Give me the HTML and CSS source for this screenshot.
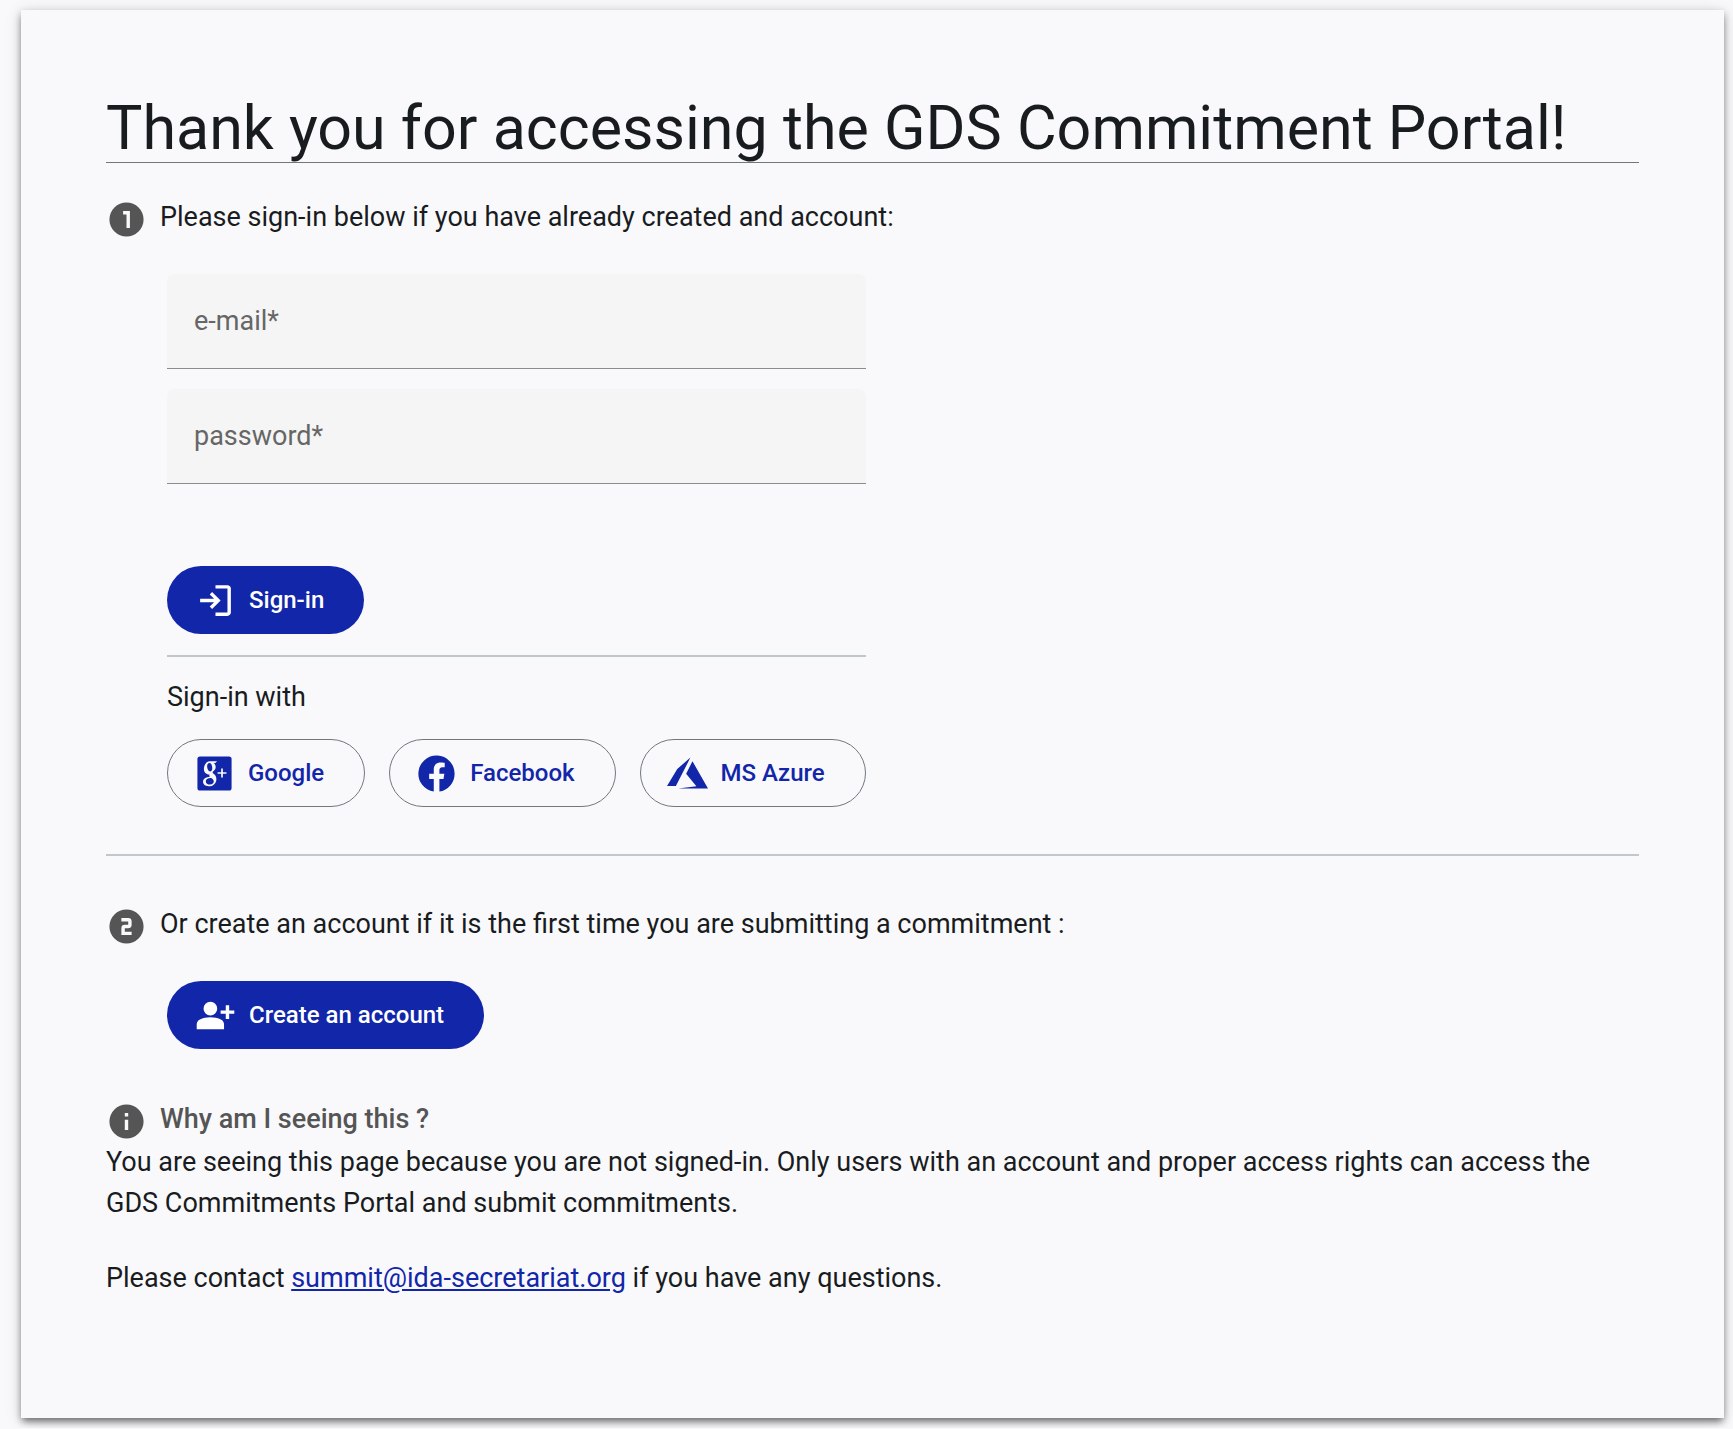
FILE: index.html
```html
<!DOCTYPE html>
<html lang="en">
<head>
    <meta charset="UTF-8">
    <meta name="viewport" content="width=device-width, initial-scale=1.0">
    <title>GDS Commitment Portal</title>
    <link rel="stylesheet" href="styles.css">
</head>
<body>
    <main class="card">
        <h1 class="title">Thank you for accessing the GDS Commitment Portal!</h1>

        <section>
            <h2 class="step">
                <svg class="icon" viewBox="0 0 24 24" aria-hidden="true"><path fill-rule="evenodd" d="M12 2a10 10 0 1 0 0 20 10 10 0 0 0 0-20zM10 7h4v10h-2V9h-2z"/></svg>
                Please sign-in below if you have already created and account:
            </h2>

            <form class="login">
                <div class="field">
                    <label for="email">e-mail*</label>
                    <input type="email" id="email" required>
                </div>
                <div class="field">
                    <label for="password">password*</label>
                    <input type="password" id="password" required>
                </div>
                <button type="submit" class="btn btn-filled btn-submit">
                    <svg class="icon" viewBox="0 -960 960 960" aria-hidden="true"><path d="M480-120v-80h280v-560H480v-80h280q33 0 56.5 23.5T840-760v560q0 33-23.5 56.5T760-120H480Zm-80-160-55-58 102-102H120v-80h327L345-622l55-58 200 200-200 200Z"/></svg>
                    Sign-in
                </button>
                <hr class="divider">
                <p class="with">Sign-in with</p>
                <div class="providers">
                    <button type="button" class="btn btn-outlined">
                        <svg class="icon" viewBox="0 0 24 24" aria-hidden="true"><rect x="2" y="2" width="20" height="20" rx="1.5"/><path fill="#f9f9fc" fill-rule="evenodd" d="M9.2 4.900h4.300l-1 .9h-1c.8.6 1.200 1.400 1.200 2.400 0 1.200-.7 2-1.400 2.500-.7.600-.4 1 .2 1.500 1 .8 1.600 1.700 1.600 3.100 0 2.400-1.900 4.200-4.500 4.200-2 0-3.300-1.100-3.300-2.600 0-1.800 1.700-2.900 4-3-.3-.4-.4-.8-.2-1.300-1.900.1-3.300-1.200-3.300-3.200 0-2.500 1.500-4.500 3.400-4.500zM9 5.800c-.9 0-1.400.9-1.300 2.300.1 1.500.8 2.700 1.700 2.700s1.400-.9 1.300-2.200C10.600 7 10 5.800 9 5.800zM9.700 14.600c-1.800 0-2.800.8-2.800 1.900 0 1.200 1 2 2.500 2 1.400 0 2.200-.8 2.200-1.900 0-.8-.6-1.300-1.500-2z"/><path fill="none" stroke="#f9f9fc" d="M13.800 11.700h5.200M16.400 9.100v5.200"/></svg>
                        Google
                    </button>
                    <button type="button" class="btn btn-outlined">
                        <svg class="icon" viewBox="0 0 24 24" aria-hidden="true"><path d="M22.600 12.100a10.600 10.600 0 1 0-12.200 10.500v-7.400H7.700v-3.100h2.700V9.700c0-2.700 1.600-4.200 4-4.200 1.200 0 2.400.2 2.400.2v2.700h-1.400c-1.300 0-1.700.8-1.700 1.700v2h2.900l-.5 3.100h-2.400v7.400a10.600 10.600 0 0 0 8.900-10.500z"/></svg>
                        Facebook
                    </button>
                    <button type="button" class="btn btn-outlined">
                        <svg class="icon" viewBox="0 0 24 24" aria-hidden="true"><path d="M13.700 2.700 6 9.300 0 19.300h5.200zM14.900 4.800l-3.700 7.400 6 7.300-10.600 1.300H24z"/></svg>
                        MS Azure
                    </button>
                </div>
            </form>
        </section>

        <hr class="divider divider-wide">

        <section class="register">
            <h2 class="step">
                <svg class="icon" viewBox="0 0 24 24" aria-hidden="true"><path fill-rule="evenodd" d="M12 2a10 10 0 1 0 0 20 10 10 0 0 0 0-20zM9 7v2h4v2h-2a2 2 0 0 0-2 2v4h6v-2h-4v-2h2a2 2 0 0 0 2-2V9a2 2 0 0 0-2-2z"/></svg>
                Or create an account if it is the first time you are submitting a commitment :
            </h2>
            <button type="button" class="btn btn-filled">
                <svg class="icon" viewBox="0 -960 960 960" aria-hidden="true"><path d="M720-400v-120H600v-80h120v-120h80v120h120v80H800v120h-80Zm-360-80q-66 0-113-47t-47-113q0-66 47-113t113-47q66 0 113 47t47 113q0 66-47 113t-113 47ZM40-160v-112q0-34 17.500-62.500T104-378q62-31 126-46.500T360-440q66 0 130 15.500T616-378q29 15 46.500 43.500T680-272v112H40Z"/></svg>
                Create an account
            </button>
        </section>

        <section class="info">
            <h2 class="step step-info">
                <svg class="icon" viewBox="0 0 24 24" aria-hidden="true"><path fill-rule="evenodd" d="M12 2a10 10 0 1 0 0 20 10 10 0 0 0 0-20zM11 7h2v2h-2zM11 11h2v6h-2z"/></svg>
                Why am I seeing this ?
            </h2>
            <p>You are seeing this page because you are not signed-in. Only users with an account and proper access rights can access the GDS Commitments Portal and submit commitments.</p>
            <p>Please contact <a href="mailto:summit@ida-secretariat.org">summit@ida-secretariat.org</a> if you have any questions.</p>
        </section>
    </main>
</body>
</html>
```
FILE: styles.css
```css
* {
    box-sizing: border-box;
}

body {
    margin: 0;
    padding: 10px 9px 10px 21px;
    background: #f9f9fc;
    color: #191c1e;
    font-family: Roboto, sans-serif;
    font-size: 27px;
    line-height: 41px;
}

h1,
h2,
p {
    margin: 0;
}

.card {
    padding: 85px 85px 119px;
    background: #f9f9fc;
    box-shadow: 0 5px 7px -2px rgba(0, 0, 0, 0.4), 0 3px 8px rgba(0, 0, 0, 0.24), 0 2px 17px rgba(0, 0, 0, 0.12);
}

.title {
    border-bottom: 1px solid #70787e;
    font-size: 61px;
    font-weight: 400;
    line-height: 67px;
}

.icon {
    flex: none;
    width: 41px;
    height: 41px;
    fill: currentColor;
}

.step {
    display: flex;
    gap: 13px;
    margin-top: 34px;
    font-size: 27px;
    font-weight: 400;
}

.step .icon {
    margin-top: 2px;
    fill: #555;
}

.step-info {
    margin-top: 50px;
    color: #555;
    font-weight: 500;
}

.login {
    width: fit-content;
    margin: 34px 0 0 61px;
}

.field {
    position: relative;
    margin-bottom: 20px;
}

.field label {
    position: absolute;
    top: 27px;
    left: 27px;
    color: #666;
}

.field input {
    display: block;
    width: 100%;
    height: 95px;
    padding: 40px 27px 14px;
    border: 0;
    border-bottom: 1px solid #8c8c8c;
    border-radius: 7px 7px 0 0;
    outline: 0;
    background: #f5f5f5;
    font: inherit;
}

.btn {
    display: inline-flex;
    align-items: center;
    gap: 13px;
    height: 68px;
    padding: 0 40px 0 28px;
    border: 0;
    border-radius: 34px;
    font: 500 24px/34px Roboto, sans-serif;
    cursor: pointer;
}

.btn-filled {
    background: #1226aa;
    color: #fff;
}

.btn-submit {
    display: flex;
    margin-top: 82px;
}

.btn-outlined {
    padding-left: 26px;
    border: 1px solid #70787e;
    background: transparent;
    color: #1226aa;
}

.divider {
    margin: 21px 0 20px;
    border: 0;
    border-top: 2px solid #c0c7cd;
}

.with {
    margin-bottom: 21px;
}

.providers {
    display: flex;
    gap: 24px;
}

.divider-wide {
    margin: 47px 0 48px;
}

.register .btn {
    margin: 34px 0 0 61px;
}

.info p + p {
    margin-top: 34px;
}

a {
    color: #1226aa;
}
```
